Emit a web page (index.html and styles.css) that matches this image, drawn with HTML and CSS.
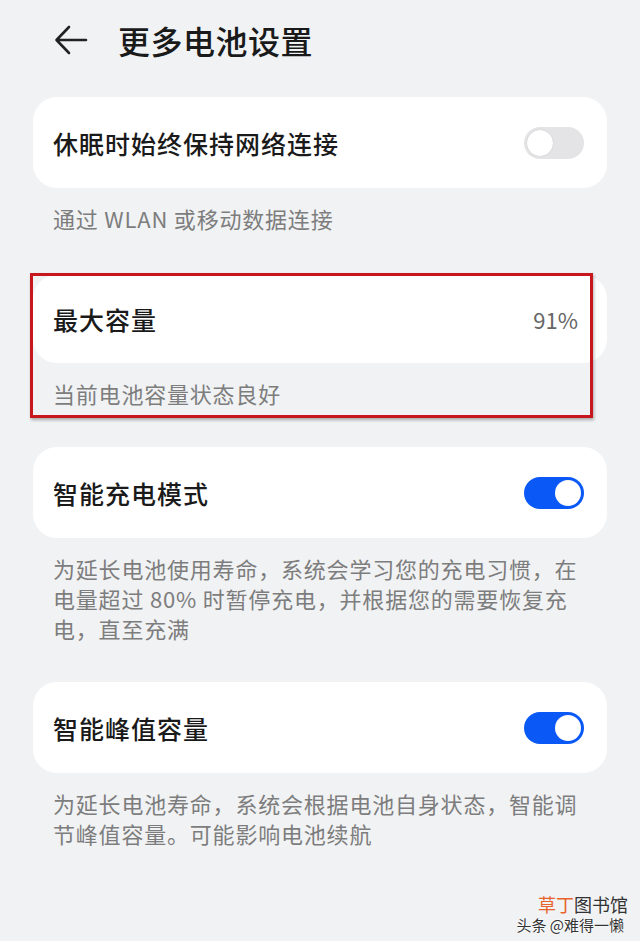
FILE: index.html
```html
<!DOCTYPE html>
<html lang="zh-CN">
<head>
  <meta charset="UTF-8">
  <title>更多电池设置</title>
  <meta name="viewport" content="width=device-width, initial-scale=1.0">
  <link rel="stylesheet" href="styles.css">
</head>
<body>

  <header class="topbar">
    <svg class="back" width="34" height="30" viewBox="0 0 34 30">
      <path d="M32 15H3M15 2L2.5 15L15 28" fill="none" stroke="#222" stroke-width="2.6" stroke-linecap="round" stroke-linejoin="round"/>
    </svg>
    <h1>更多电池设置</h1>
  </header>

  <div class="main">
    <div class="group">
      <div class="card">
        <span class="label">休眠时始终保持网络连接</span>
        <span class="switch"></span>
      </div>
      <p class="desc">通过 WLAN 或移动数据连接</p>
    </div>

    <div class="group marked">
      <div class="card">
        <span class="label">最大容量</span>
        <span class="value">91%</span>
      </div>
      <p class="desc">当前电池容量状态良好</p>
      <!-- red annotation frame -->
      <span class="frame"></span>
    </div>

    <div class="group">
      <div class="card">
        <span class="label">智能充电模式</span>
        <span class="switch on"></span>
      </div>
      <p class="desc">为延长电池使用寿命，系统会学习您的充电习惯，在电量超过 80% 时暂停充电，并根据您的需要恢复充电，直至充满</p>
    </div>

    <div class="group">
      <div class="card">
        <span class="label">智能峰值容量</span>
        <span class="switch on"></span>
      </div>
      <p class="desc">为延长电池寿命，系统会根据电池自身状态，智能调节峰值容量。可能影响电池续航</p>
    </div>
  </div>

  <div class="watermark">
    <div class="wm-top"><span class="orange">草丁</span>图书馆</div>
    <div class="wm-bottom">头条 @难得一懒</div>
  </div>

</body>
</html>
```

FILE: styles.css
```css
body {
  font-family: "Noto Sans CJK SC", "Noto Sans", sans-serif;
  background-color: #f1f2f4;
  margin: 0;
  padding: 0;
  width: 640px;
  height: 941px;
  position: relative;
  overflow: hidden;
  color: #1a1a1a;
}
.topbar {
  height: 80px;
  display: flex;
  align-items: center;
  padding-left: 54px;
}
.back {
  display: block;
  margin-right: 30px;
}
.topbar h1 {
  margin: 0;
  font-size: 32px;
  font-weight: 500;
  letter-spacing: 0.5px;
  color: #1a1a1a;
}
.main {
  padding: 17px 33px 0;
}
.group {
  margin-bottom: 39px;
}
.group:first-child {
  margin-bottom: 0;
}
.group.marked {
  position: relative;
  margin-top: 42px;
}
.group.marked .card {
  height: 88px;
}
.card {
  background: #fff;
  border-radius: 24px;
  height: 91px;
  display: flex;
  align-items: center;
  justify-content: space-between;
  padding: 0 23px 0 20px;
}
.label {
  font-size: 25px;
  font-weight: 500;
  letter-spacing: 1px;
}
.value {
  font-size: 22px;
  color: #666;
  margin-right: 6px;
}
.desc {
  margin: 15px 0 0;
  padding: 0 18px 0 20px;
  font-size: 22px;
  line-height: 30px;
  letter-spacing: 0.8px;
  color: #7d7d7d;
}
.switch {
  width: 60px;
  height: 32px;
  border-radius: 16px;
  background: #e4e4e6;
  position: relative;
}
.switch::after {
  content: "";
  position: absolute;
  top: 3px;
  left: 3px;
  width: 26px;
  height: 26px;
  border-radius: 50%;
  background: #fff;
  box-shadow: 0 0 1px rgba(0,0,0,0.25);
}
.switch.on {
  background: #0a59f7;
}
.switch.on::after {
  left: 31px;
  box-shadow: none;
}
.frame {
  position: absolute;
  left: -3px;
  right: 14px;
  top: -2px;
  height: 139px;
  border: 3px solid #c8161d;
  box-shadow: 1px 2px 3px rgba(0,0,0,0.3);
}
.watermark {
  position: absolute;
  right: 12px;
  top: 895px;
  width: 122px;
  height: 40px;
}
.wm-top {
  position: absolute;
  right: 0;
  top: 0;
  font-size: 18px;
  line-height: 18px;
  color: #333;
}
.orange {
  color: #e8632b;
}
.wm-bottom {
  position: absolute;
  right: 4px;
  top: 22px;
  font-size: 15px;
  line-height: 15px;
  color: #333;
  text-shadow: 0 0 2px #fff, 0 0 2px #fff;
}
```
